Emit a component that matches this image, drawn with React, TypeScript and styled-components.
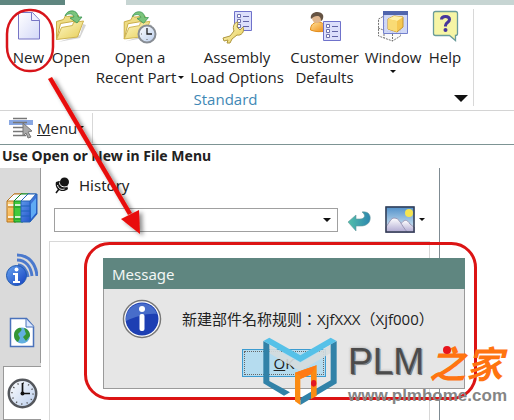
import React from 'react';
import styled, { createGlobalStyle } from 'styled-components';

const GlobalStyle = createGlobalStyle`
  * { box-sizing: border-box; }
  body {
    margin: 0;
    background: #fff;
    color: #222;
    font-family: "Open Sans", "Noto Sans", "Noto Sans CJK SC", sans-serif;
    font-size: 15px;
    line-height: 20px;
    overflow: hidden;
  }
  button, select { font: inherit; color: inherit; }
`;

const Page = styled.div`
  position: relative;
  min-height: 100vh;
  display: flex;
  flex-direction: column;
`;

const TabStrip = styled.div`
  display: flex;
  height: 5px;
`;

const TabPiece = styled.div<{ $color: string; $width?: number }>`
  background: ${(p) => p.$color};
  ${(p) => (p.$width ? `width: ${p.$width}px;` : 'flex: 1;')}
`;

const Ribbon = styled.header`
  display: flex;
  height: 106px;
  padding-top: 4px;
  border-bottom: 1px solid #d4d4d4;
`;

const RibbonGroup = styled.section`
  display: flex;
  flex-direction: column;
  width: 474px;
  height: 97px;
  padding-left: 8px;
  border-right: 1px solid #d8d8d8;
`;

const Tools = styled.div`
  display: flex;
  height: 80px;
  padding-top: 1px;
`;

const ToolButton = styled.button<{ $width: number }>`
  display: flex;
  flex-direction: column;
  align-items: center;
  width: ${(p) => p.$width}px;
  padding: 0;
  border: 0;
  background: none;
  white-space: nowrap;
  svg { flex: none; }
`;

const ToolLabel = styled.span`
  display: flex;
  flex-direction: column;
  align-items: center;
  padding-top: 3px;
`;

const LabelLine = styled.span`
  display: flex;
  align-items: center;
  gap: 2px;
`;

const WindowCaret = styled.span`
  display: flex;
  padding-top: 3px;
`;

const GroupFooter = styled.div`
  display: grid;
  grid-template-columns: 1fr auto 1fr;
  align-items: center;
  height: 20px;
  padding-right: 5px;
  color: #3f88b5;
`;

const GroupTitle = styled.span`
  grid-column: 2;
  padding: 2px 25px 0 0;
`;

const MoreButton = styled.button`
  justify-self: end;
  display: flex;
  padding: 0;
  border: 0;
  background: none;
`;

const MenuBar = styled.nav`
  display: flex;
  align-items: center;
  height: 34px;
  padding-left: 8px;
  border-bottom: 1px solid #7d9494;
`;

const MenuButton = styled.button`
  display: flex;
  align-items: center;
  gap: 3px;
  height: 30px;
  width: 85px;
  padding: 0;
  border: 0;
  border-right: 1px solid #d8d8d8;
  background: none;
`;

const MenuText = styled.span`
  display: flex;
  align-items: center;
  gap: 1px;
`;

const Prompt = styled.p`
  margin: 0;
  height: 23px;
  padding-left: 2px;
  font-family: "Noto Sans", sans-serif;
  font-size: 14px;
  line-height: 22px;
  font-weight: 700;
`;

const Workspace = styled.main`
  display: flex;
  flex: 1;
`;

const Sidebar = styled.aside`
  display: flex;
  flex-direction: column;
  width: 41px;
  background: #dadada;
`;

const SideTab = styled.button`
  display: flex;
  align-items: center;
  justify-content: center;
  height: 62px;
  padding: 0 0 0 4px;
  border: 0;
  border-right: 1px solid #999;
  background: none;
  &:first-child {
    height: 71px;
    padding-top: 9px;
  }
`;

const ActiveSideTab = styled(SideTab)`
  height: 54px;
  margin: 3px 0 0 3px;
  padding: 0;
  border: 1px solid #999;
  border-right: 0;
  background: #fff;
`;

const HistoryPanel = styled.section`
  display: flex;
  flex-direction: column;
  flex: 1;
  margin-right: 74px;
  border-right: 1px solid #7f8b92;
`;

const PanelTitle = styled.h2`
  display: flex;
  align-items: center;
  gap: 9px;
  height: 34px;
  margin: 0;
  padding-left: 14px;
  font-family: "Noto Sans", sans-serif;
  font-size: 15px;
  font-weight: 400;
`;

const SearchRow = styled.div`
  display: flex;
  align-items: center;
  height: 35px;
  padding: 0 14px 0 13px;
`;

const ComboWrap = styled.div`
  position: relative;
  flex: 1;
  height: 24px;
`;

const Combo = styled.select`
  appearance: none;
  width: 100%;
  height: 24px;
  border: 1px solid #a0a0a0;
  border-radius: 0;
  background: #fff;
`;

const ComboCaret = styled.span`
  position: absolute;
  right: 7px;
  top: 10px;
  display: flex;
  pointer-events: none;
`;

const IconButton = styled.button<{ $gap: number }>`
  display: flex;
  align-items: center;
  gap: 4px;
  margin-left: ${(p) => p.$gap}px;
  padding: 0;
  border: 0;
  background: none;
`;

const HistoryList = styled.div`
  flex: 1;
  margin: 4px 9px 0 8px;
  border: 1px solid #d8d8d8;
  border-bottom: 0;
`;

const Dialog = styled.div`
  position: absolute;
  left: 103px;
  top: 258px;
  width: 362px;
  background: #e6e6e6;
  border: 1px solid #9a9a9a;
  border-top: 0;
`;

const DialogTitle = styled.h3`
  margin: 0 -1px;
  height: 31px;
  padding-left: 9px;
  background: #5f8680;
  color: #f2f6f5;
  font-family: "Noto Sans", sans-serif;
  font-size: 15px;
  font-weight: 400;
  line-height: 33px;
`;

const DialogBody = styled.div`
  display: flex;
  align-items: center;
  gap: 20px;
  height: 60px;
  padding: 0 0 0 18px;
  white-space: nowrap;
`;

const DialogText = styled.p`
  margin: 0;
  font-family: "Open Sans", "Noto Sans CJK TC", sans-serif;
  font-size: 15px;
`;

const DialogActions = styled.div`
  display: flex;
  justify-content: center;
  height: 39px;
`;

const OkButton = styled.button`
  width: 84px;
  height: 28px;
  padding: 1px;
  border: 1px solid #3c9bd0;
  background: #b5dcef;
  span {
    display: block;
    height: 24px;
    border: 1px dotted #666;
    line-height: 22px;
  }
`;

const Annotation = styled.svg`
  position: absolute;
  left: 0;
  top: 0;
  pointer-events: none;
`;

const Watermark = styled.div`
  position: absolute;
  left: 263px;
  top: 337px;
  display: flex;
  gap: 10px;
`;

const Brand = styled.div`
  display: flex;
  flex-direction: column;
`;

const BrandName = styled.div`
  display: flex;
  align-items: center;
  gap: 5px;
  height: 50px;
  font-family: "Liberation Sans", sans-serif;
  font-size: 37px;
  line-height: 54px;
  color: #4b4b4b;
  text-shadow: 0 0 3px #bbb, 0 0 3px #bbb, 1px 1px 0 #4b4b4b;
`;

const BrandAccent = styled.span`
  position: relative;
  font-family: "Noto Sans CJK SC", sans-serif;
  font-size: 37px;
  font-weight: 700;
  font-style: italic;
  line-height: 50px;
  color: #ff7410;
  text-shadow: none;
  &::before {
    content: "";
    position: absolute;
    left: 14px;
    top: 9px;
    width: 8px;
    height: 8px;
    border-radius: 50%;
    background: #e8141c;
  }
`;

const BrandUrl = styled.a`
  font-family: "Liberation Sans", sans-serif;
  font-size: 17px;
  font-weight: 700;
  line-height: 18px;
  color: #858585;
  text-decoration: none;
`;

const HiddenSvg = styled.svg`
  position: absolute;
`;

const Caret = ({ w = 6 }: { w?: number }) => (
  <svg width={w} height={Math.round(w / 2)} viewBox="0 0 12 6">
    <path d="M0 0h12L6 6z" fill="#111" />
  </svg>
);

const Defs = () => (
  <HiddenSvg width="0" height="0">
    <defs>
      <linearGradient id="paper" x2="1" y2="1"><stop stopColor="#fff" /><stop offset="1" stopColor="#d3d8f8" /></linearGradient>
      <linearGradient id="folder" x2="1" y2="1"><stop stopColor="#fdf8c8" /><stop offset="1" stopColor="#e7cd55" /></linearGradient>
      <linearGradient id="blue" x2="1" y2="1"><stop stopColor="#68a4ef" /><stop offset="1" stopColor="#123fc0" /></linearGradient>
      <linearGradient id="dial" x2="1" y2="1"><stop stopColor="#fff" /><stop offset="1" stopColor="#b9cdec" /></linearGradient>
      <linearGradient id="orange" x2="1" y2="1"><stop stopColor="#ffe29b" /><stop offset="1" stopColor="#ee8a12" /></linearGradient>
      <linearGradient id="teal" x2="1"><stop stopColor="#54c0aa" /><stop offset="1" stopColor="#2c87af" /></linearGradient>
      <linearGradient id="sky" x2="0" y2="1"><stop stopColor="#4f8fc9" /><stop offset="1" stopColor="#e9f5fb" /></linearGradient>
      <linearGradient id="hill" x2="0" y2="1"><stop stopColor="#fff" /><stop offset="1" stopColor="#aaa3ce" /></linearGradient>
    </defs>
  </HiddenSvg>
);

const NewIcon = () => (
  <svg width="34" height="34" viewBox="0 0 34 34">
    <path d="M6.5 2.500h14l7 7.500v19h-21z" fill="url(#paper)" stroke="#7775c5" />
    <path d="M19.500 2.500v8h8" fill="#eff1ff" stroke="#7775c5" />
  </svg>
);

const FolderShape = () => (
  <>
    <path d="M7 34 29 30l6-13-3-1-3 11z" fill="#aaa" opacity=".5" />
    <path d="M5.500 13.500v18l4-16 18-3v-5l-11 1-2-1-2 4z" fill="#eedc83" stroke="#c8ac46" strokeLinejoin="round" />
    <path d="m5.500 31.500 5-12 11-2 1-3 10-1.500-6 16z" fill="url(#folder)" stroke="#cdb34f" strokeLinejoin="round" />
    <path d="M14 8C16 1 27 1 27 9h4l-5 6-7-5 4-1c-1-4-6-4-9-1z" fill="#7bc47b" stroke="#3b9656" strokeWidth=".8" />
  </>
);

const OpenIcon = () => (
  <svg width="34" height="34" viewBox="3 2 34 34"><FolderShape /></svg>
);

const RecentIcon = () => (
  <svg width="34" height="34" viewBox="0 0 34 34">
    <g transform="translate(-4 -1) scale(.95)"><FolderShape /></g>
    <circle cx="24" cy="24" r="8.500" fill="url(#dial)" stroke="#888d94" strokeWidth="2" />
    <path d="M24 18v6h5" fill="none" stroke="#222" strokeWidth="1.300" />
    <path d="M18 24h1m5 5v1" stroke="#666" />
  </svg>
);

const Checklist = ({ x, y }: { x: number; y: number }) => (
  <g transform={`translate(${x} ${y})`}>
    <path d="M.500.500h17v19H.500z" fill="#dcdffb" stroke="#6f72cb" />
    <path d="M3.500 3.500h3v3h-3zm0 5h3v3h-3zm0 5h3v3h-3z" fill="#fff" stroke="#6163a5" strokeWidth=".9" />
    <path d="M9 5.500h6M9 10.500h6M9 15.500h6" stroke="#6163a5" />
  </g>
);

const AssemblyIcon = () => (
  <svg width="34" height="34" viewBox="0 0 34 34">
    <Checklist x={14} y={1} />
    <path d="m3 28 7-2 4-5c-2-5 1-9 4-9l-1 5 3 3 3-3c2 5-2 9-6 8l-5 4-2 4-3 0 1-3-4 1z" fill="url(#folder)" stroke="#ae963d" strokeLinejoin="round" />
  </svg>
);

const CustomerIcon = () => (
  <svg width="34" height="34" viewBox="0 0 34 34">
    <path d="M2.500 20c0-6 4-8 8-8s7 3 7 9c-5 1-10 1-15-1z" fill="url(#orange)" stroke="#e28c18" />
    <circle cx="9" cy="8" r="5" fill="#dfb68e" />
    <path d="M3 9C1 1 13 0 15 5c1 3-1 6-2 6 0-3-1-5-4-5-2 0-4 1-6 3z" fill="#655343" />
    <Checklist x={15} y={11} />
  </svg>
);

const WindowIcon = () => (
  <svg width="34" height="34" viewBox="0 0 34 34">
    <path d="m2.500 9 11-6 11 5v18l-8 5-14-5zM2 18l11 4 12-4M8 6v22M16.500 3v28" fill="#fafafa" stroke="#777" strokeDasharray="2 1" />
    <path d="M7.500 1.500h24v22h-24z" fill="#cbd4f5" fillOpacity=".9" stroke="#7481ce" />
    <path d="M7 1h25v4H7z" fill="#5065ad" />
    <path d="m12 9 6-3 9 1v10l-6 5-9-3z" fill="#f5c752" stroke="#c6952c" />
    <path d="m12 9 6-3 9 1-6 4z" fill="#fff0a6" />
    <path d="m12 9 9 2v11l-9-3z" fill="#f9db75" />
  </svg>
);

const HelpIcon = () => (
  <svg width="34" height="34" viewBox="0 0 34 34">
    <path d="M7.500 1.500h20q2 0 2 2v20q0 2-2 2v5l-6-5h-14q-2 0-2-2v-20q0-2 2-2z" fill="#f6f5a5" stroke="#6a9c9a" strokeWidth="1.300" />
    <path d="M13.500 9.500c0-4 8-4 8 0 0 3-4 3-4 6v1" fill="none" stroke="#46369c" strokeWidth="3" />
    <circle cx="17.500" cy="20" r="2" fill="#46369c" />
  </svg>
);

const MenuIcon = () => (
  <svg width="26" height="22" viewBox="0 0 26 22">
    <path d="M1 3h24v5H1z" fill="#89a7e2" />
    <path d="M5 1.500h14M5 5.500h14M5 10.500h11M5 14.500h11M5 18.500h13" stroke="#777" strokeWidth="1.300" />
    <path d="m15 6 9 8-4 1 3 5-3 1-2-5-3 3z" fill="#aaa" stroke="#777" />
  </svg>
);

const PinIcon = () => (
  <svg width="15" height="17" viewBox="0 0 15 17">
    <circle cx="9.500" cy="5" r="4.500" fill="#151515" />
    <path d="M1 5c-2 7 6 12 12 7l-1-4-8-4z" fill="#151515" />
    <path d="m4 12-3 4" stroke="#151515" strokeWidth="1.500" />
    <path d="M4.500 5.500c0 4 4 5 8 4M2.500 8c1 4 4 5 7 4" fill="none" stroke="#fff" />
  </svg>
);

const Book = ({ x, fill, edge }: { x: number; fill: string; edge: string }) => (
  <g transform={`translate(${x} 0)`}>
    <path d="m1 8 7-7h9l-7 8v20H1z" fill={fill} stroke={edge} strokeLinejoin="round" />
    <path d="m1 8 7-7h8l-6 7z" fill="#f8fbff" stroke={edge} />
    <path d="M2 12h7M2 24h7" stroke="#fff" strokeWidth="1.300" />
    <path d="M2 26h7M2 14h7" stroke={edge} />
  </g>
);

const BooksIcon = () => (
  <svg width="32" height="30" viewBox="0 0 32 30">
    <Book x={0} fill="url(#orange)" edge="#b8771e" />
    <Book x={7} fill="#42ca3b" edge="#128b27" />
    <path d="m15 8 7-7h9v20l-7 8h-9z" fill="url(#blue)" stroke="#2865b5" strokeLinejoin="round" />
    <path d="m15 8 7-7h8l-6 7z" fill="#fff" stroke="#2865b5" />
    <path d="M24 8v21M15 13h9M15 18h9M15 23h9" stroke="#1e61ba" />
    <path d="m25 11 5-6v15l-5 6z" fill="#60aaf4" />
  </svg>
);

const BroadcastIcon = () => (
  <svg width="32" height="34" viewBox="0 0 32 34">
    <path d="M11 2c12 0 19 9 20 21M11 7c9 0 14 7 15 16M12 12c5 0 9 5 10 12" fill="none" stroke="#4b79cd" strokeWidth="3" />
    <circle cx="10.500" cy="22.500" r="10" fill="url(#blue)" stroke="#1e58af" />
    <circle cx="10.500" cy="16.500" r="2" fill="#fff" />
    <path d="M7 20h5v8h2v2H7v-2h2v-6H7z" fill="#fff" />
  </svg>
);

const WebPageIcon = () => (
  <svg width="26" height="31" viewBox="0 0 26 31">
    <path d="M1.500 1.500h16l7 8v20h-23z" fill="#fff" stroke="#4a72bb" strokeWidth="1.500" />
    <path d="M17 2v8h8" fill="#dce8ff" stroke="#4a72bb" />
    <circle cx="13" cy="18.500" r="8" fill="#62afe0" />
    <path d="M6 14c5-6 8-2 6 0l-3 3 2 4-2 4c-4-2-5-7-3-11zm9-3c4 1 6 4 6 8l-4 5-3-4 3-3z" fill="#349634" />
  </svg>
);

const ClockIcon = () => (
  <svg width="31" height="31" viewBox="0 0 31 31">
    <circle cx="15.500" cy="15.500" r="13.700" fill="url(#dial)" stroke="#54575c" strokeWidth="2.500" />
    <circle cx="15.500" cy="15.500" r="10.500" fill="none" stroke="#555" strokeWidth="1.500" strokeDasharray="1.200 4.298" />
    <path d="M15.500 5v10.500H23" fill="none" stroke="#111" strokeWidth="1.700" />
    <circle cx="15.500" cy="15.500" r="2" fill="#111" />
  </svg>
);

const ReturnIcon = () => (
  <svg width="24" height="22" viewBox="0 0 24 22">
    <path d="M1 13 9 6v4h4c5 0 6-4 2-7 7-1 9 4 8 8-1 4-5 6-9 6H9v5z" fill="url(#teal)" stroke="#66999d" strokeWidth=".6" />
  </svg>
);

const PictureIcon = () => (
  <svg width="30" height="27" viewBox="0 0 30 27">
    <path d="M.5.5h29v26H.5z" fill="url(#sky)" />
    <circle cx="24" cy="7" r="4" fill="#f5e450" />
    <path d="M15 27V19c4-6 7-6 10-1l5 4v5z" fill="url(#hill)" stroke="#9b99b8" />
    <path d="M1 21c3-4 5-9 8-9 6 0 6 6 14 15H1z" fill="url(#hill)" stroke="#9b99b8" />
    <path d="M1 1h28v25H1z" fill="none" stroke="#323b52" strokeWidth="1.500" />
  </svg>
);

const InfoIcon = () => (
  <svg width="40" height="40" viewBox="0 0 40 40">
    <circle cx="20" cy="20" r="18.500" fill="#fff" stroke="#777" strokeWidth="1.500" />
    <circle cx="20" cy="20" r="16.500" fill="#1d3fb3" />
    <path d="M4 22a16 16 0 0 1 31-7C25 14 13 18 4 22z" fill="#5f85d7" opacity=".65" />
    <circle cx="20" cy="10" r="3" fill="#fff" />
    <rect x="17.500" y="15" width="5" height="17" rx="2" fill="#fff" />
  </svg>
);

const CubeLogo = () => (
  <svg width="75" height="69" viewBox="99 36 225 207">
    <path d="m118 60 93 53 91-53v24l-91 54-93-53z" fill="#d5dbdd" opacity=".9" />
    <path d="m100 48 18 10v110l62 34-18 10-62-37z" fill="#3182a8" />
    <path d="m320 48-18 10v108l-91 53v21l109-65z" fill="#3182a8" />
    <path d="m100 48 18-10 93 53 91-53 18 10-109 63z" fill="#56c1e8" />
    <path d="m195 143 65-22v92l-17 9v-74l-32 14v78l-16-11z" fill="#fb8b13" />
    <path d="m195 143 16 9v10l32-14 17-27z" fill="#ff7b16" />
    <ellipse cx="251" cy="175" rx="8" ry="10" fill="#e31822" />
  </svg>
);

export default function App() {
  return (
    <Page>
      <GlobalStyle />
      <Defs />
      <TabStrip>
        <TabPiece $color="#5f8680" $width={65} />
        <TabPiece $color="#fff" $width={61} />
        <TabPiece $color="#c7d5d3" />
      </TabStrip>
      <Ribbon>
        <RibbonGroup aria-label="Standard">
          <Tools>
            <ToolButton $width={41}><NewIcon /><ToolLabel>New</ToolLabel></ToolButton>
            <ToolButton $width={44}><OpenIcon /><ToolLabel>Open</ToolLabel></ToolButton>
            <ToolButton $width={94}>
              <RecentIcon />
              <ToolLabel>
                <span>Open a</span>
                <LabelLine>Recent Part<Caret /></LabelLine>
              </ToolLabel>
            </ToolButton>
            <ToolButton $width={100}>
              <AssemblyIcon />
              <ToolLabel><span>Assembly</span><span>Load Options</span></ToolLabel>
            </ToolButton>
            <ToolButton $width={75}>
              <CustomerIcon />
              <ToolLabel><span>Customer</span><span>Defaults</span></ToolLabel>
            </ToolButton>
            <ToolButton $width={62}>
              <WindowIcon />
              <ToolLabel>Window<WindowCaret><Caret /></WindowCaret></ToolLabel>
            </ToolButton>
            <ToolButton $width={42}><HelpIcon /><ToolLabel>Help</ToolLabel></ToolButton>
          </Tools>
          <GroupFooter>
            <GroupTitle>Standard</GroupTitle>
            <MoreButton aria-label="More"><Caret w={14} /></MoreButton>
          </GroupFooter>
        </RibbonGroup>
      </Ribbon>
      <MenuBar>
        <MenuButton>
          <MenuIcon />
          <MenuText><span><u>M</u>enu</span><Caret /></MenuText>
        </MenuButton>
      </MenuBar>
      <Prompt>Use Open or New in File Menu</Prompt>
      <Workspace>
        <Sidebar>
          <SideTab aria-label="Library"><BooksIcon /></SideTab>
          <SideTab aria-label="Broadcast"><BroadcastIcon /></SideTab>
          <SideTab aria-label="Web"><WebPageIcon /></SideTab>
          <ActiveSideTab aria-label="History"><ClockIcon /></ActiveSideTab>
        </Sidebar>
        <HistoryPanel>
          <PanelTitle><PinIcon />History</PanelTitle>
          <SearchRow>
            <ComboWrap>
              <Combo aria-label="History filter"><option></option></Combo>
              <ComboCaret><Caret w={8} /></ComboCaret>
            </ComboWrap>
            <IconButton $gap={9} aria-label="Back"><ReturnIcon /></IconButton>
            <IconButton $gap={14} aria-label="View"><PictureIcon /><Caret /></IconButton>
          </SearchRow>
          <HistoryList />
        </HistoryPanel>
      </Workspace>

      <Dialog role="dialog" aria-labelledby="message-title">
        <DialogTitle id="message-title">Message</DialogTitle>
        <DialogBody>
          <InfoIcon />
          <DialogText>新建部件名称规则：XjfXXX（Xjf000）</DialogText>
        </DialogBody>
        <DialogActions>
          <OkButton><span><u>O</u>K</span></OkButton>
        </DialogActions>
      </Dialog>

      <Annotation width="514" height="420" viewBox="0 0 514 420">
        <defs>
          <filter id="soft" x="-20%" y="-20%" width="140%" height="140%">
            <feDropShadow dx="3" dy="2" stdDeviation="2" floodColor="#000" floodOpacity=".45" />
          </filter>
        </defs>
        <rect x="7" y="10" width="46" height="61" rx="22" ry="24" fill="none" stroke="#d8141a" strokeWidth="2.500" />
        <rect x="85.500" y="243.500" width="390" height="155" rx="24" fill="none" stroke="#dc1414" strokeWidth="3" />
        <g filter="url(#soft)" fill="#e80c08">
          <path d="m48 79 4-2 80 136-4 2z" />
          <path d="m121 219 18-9 1 24z" />
        </g>
      </Annotation>

      <Watermark>
        <CubeLogo />
        <Brand>
          <BrandName>PLM<BrandAccent>之家</BrandAccent></BrandName>
          <BrandUrl href="#home">www.plmhome.com</BrandUrl>
        </Brand>
      </Watermark>
    </Page>
  );
}
